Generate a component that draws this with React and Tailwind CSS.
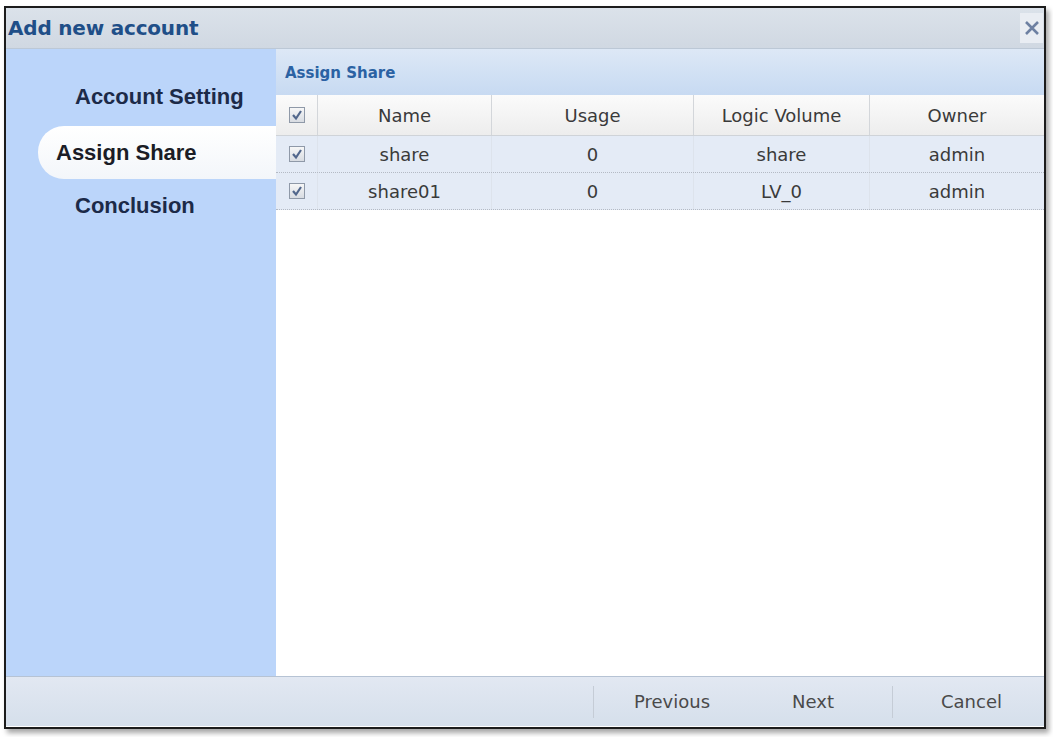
function CheckBox() {
  return (
    <div className="w-[16px] h-[16px] border border-[#8f99a8] bg-gradient-to-b from-[#f7f7f7] to-[#d8dce2] flex items-center justify-center">
      <svg width="12" height="12" viewBox="0 0 12 12">
        <path d="M2 6 L5 9.5 L10 2" fill="none" stroke="#52678c" strokeWidth="2.2" />
      </svg>
    </div>
  );
}

const cols = "grid grid-cols-[42px_174px_202px_176px_174px]";

const rows = [
  { name: 'share', usage: '0', lv: 'share', owner: 'admin' },
  { name: 'share01', usage: '0', lv: 'LV_0', owner: 'admin' },
];

export default function App() {
  return (
    <div className="w-[1053px] h-[737px] bg-white pt-[6px] pl-[4px] font-['DejaVu_Sans',sans-serif]">
      <div className="w-[1042px] h-[723px] border-2 border-[#1c1c1c] shadow-[3px_4px_5px_rgba(0,0,0,0.35)] flex flex-col">
        {/* title bar */}
        <div className="h-[41px] bg-gradient-to-b from-[#dbe2ea] to-[#d0d8e2] border-b border-[#bcc8d6] flex items-center justify-between pl-[2px] pr-[1px]">
          <span className="text-[20px] font-bold text-[#1f4f88] tracking-[-0.2px]">Add new account</span>
          <div className="w-[23px] h-[30px] bg-[#e9edf3] flex items-center justify-center">
            <svg width="16" height="16" viewBox="0 0 16 16">
              <path d="M2 2 L14 14 M14 2 L2 14" stroke="#6d80a2" strokeWidth="2.6" />
            </svg>
          </div>
        </div>

        {/* body */}
        <div className="h-[627px] flex">
          <div className="w-[270px] bg-[#bbd5fa] pt-[21px] font-['Liberation_Sans',sans-serif] font-bold text-[22px]">
            <div className="ml-[32px] h-[53px] flex items-center pl-[37px] text-[#1c2a48]">Account Setting</div>
            <div className="ml-[32px] mt-[3px] h-[53px] flex items-center pl-[18px] text-[#1b1d26] bg-gradient-to-b from-white to-[#f3f6fa] rounded-l-[26px]">Assign Share</div>
            <div className="ml-[32px] h-[53px] flex items-center pl-[37px] text-[#1c2a48]">Conclusion</div>
          </div>

          <div className="flex-1 bg-white flex flex-col">
            <div className="h-[46px] bg-gradient-to-b from-[#dde8f6] to-[#c7daf2] flex items-center pl-[9px] pt-[2px]">
              <span className="text-[15px] font-bold text-[#2b62a3]">Assign Share</span>
            </div>
            <div className={`${cols} h-[41px] bg-gradient-to-b from-[#fbfbfb] to-[#ededed] border-b border-[#cfd3d8] text-[18px] text-[#3a3a3a]`}>
              <div className="flex items-center justify-center border-r border-[#d3d6da]"><CheckBox /></div>
              <div className="flex items-center justify-center border-r border-[#d3d6da]">Name</div>
              <div className="flex items-center justify-center border-r border-[#d3d6da]">Usage</div>
              <div className="flex items-center justify-center border-r border-[#d3d6da]">Logic Volume</div>
              <div className="flex items-center justify-center">Owner</div>
            </div>
            {rows.map((r) => (
              <div key={r.name} className={`${cols} h-[37px] bg-[#e4ebf6] border-b border-dotted border-[#b4bac4] text-[18px] text-[#3a3a3a]`}>
                <div className="flex items-center justify-center border-r border-[#dde3ec]"><CheckBox /></div>
                <div className="flex items-center justify-center border-r border-[#dde3ec]">{r.name}</div>
                <div className="flex items-center justify-center border-r border-[#dde3ec]">{r.usage}</div>
                <div className="flex items-center justify-center border-r border-[#dde3ec]">{r.lv}</div>
                <div className="flex items-center justify-center">{r.owner}</div>
              </div>
            ))}
          </div>
        </div>

        {/* footer */}
        <div className="h-[50px] border-t border-[#b6c3d4] bg-gradient-to-b from-[#e2e8f2] to-[#d5dfeb] flex items-center text-[18px] text-[#4a4a4a]">
          <div className="flex-1" />
          <div className="w-px h-[32px] bg-[#c5ccd6]" />
          <div className="w-[156px] text-center">Previous</div>
          <div className="w-[126px] text-center">Next</div>
          <div className="w-[16px]" />
          <div className="w-px h-[32px] bg-[#c5ccd6]" />
          <div className="w-[151px] text-center pl-[6px]">Cancel</div>
        </div>
      </div>
    </div>
  );
}
